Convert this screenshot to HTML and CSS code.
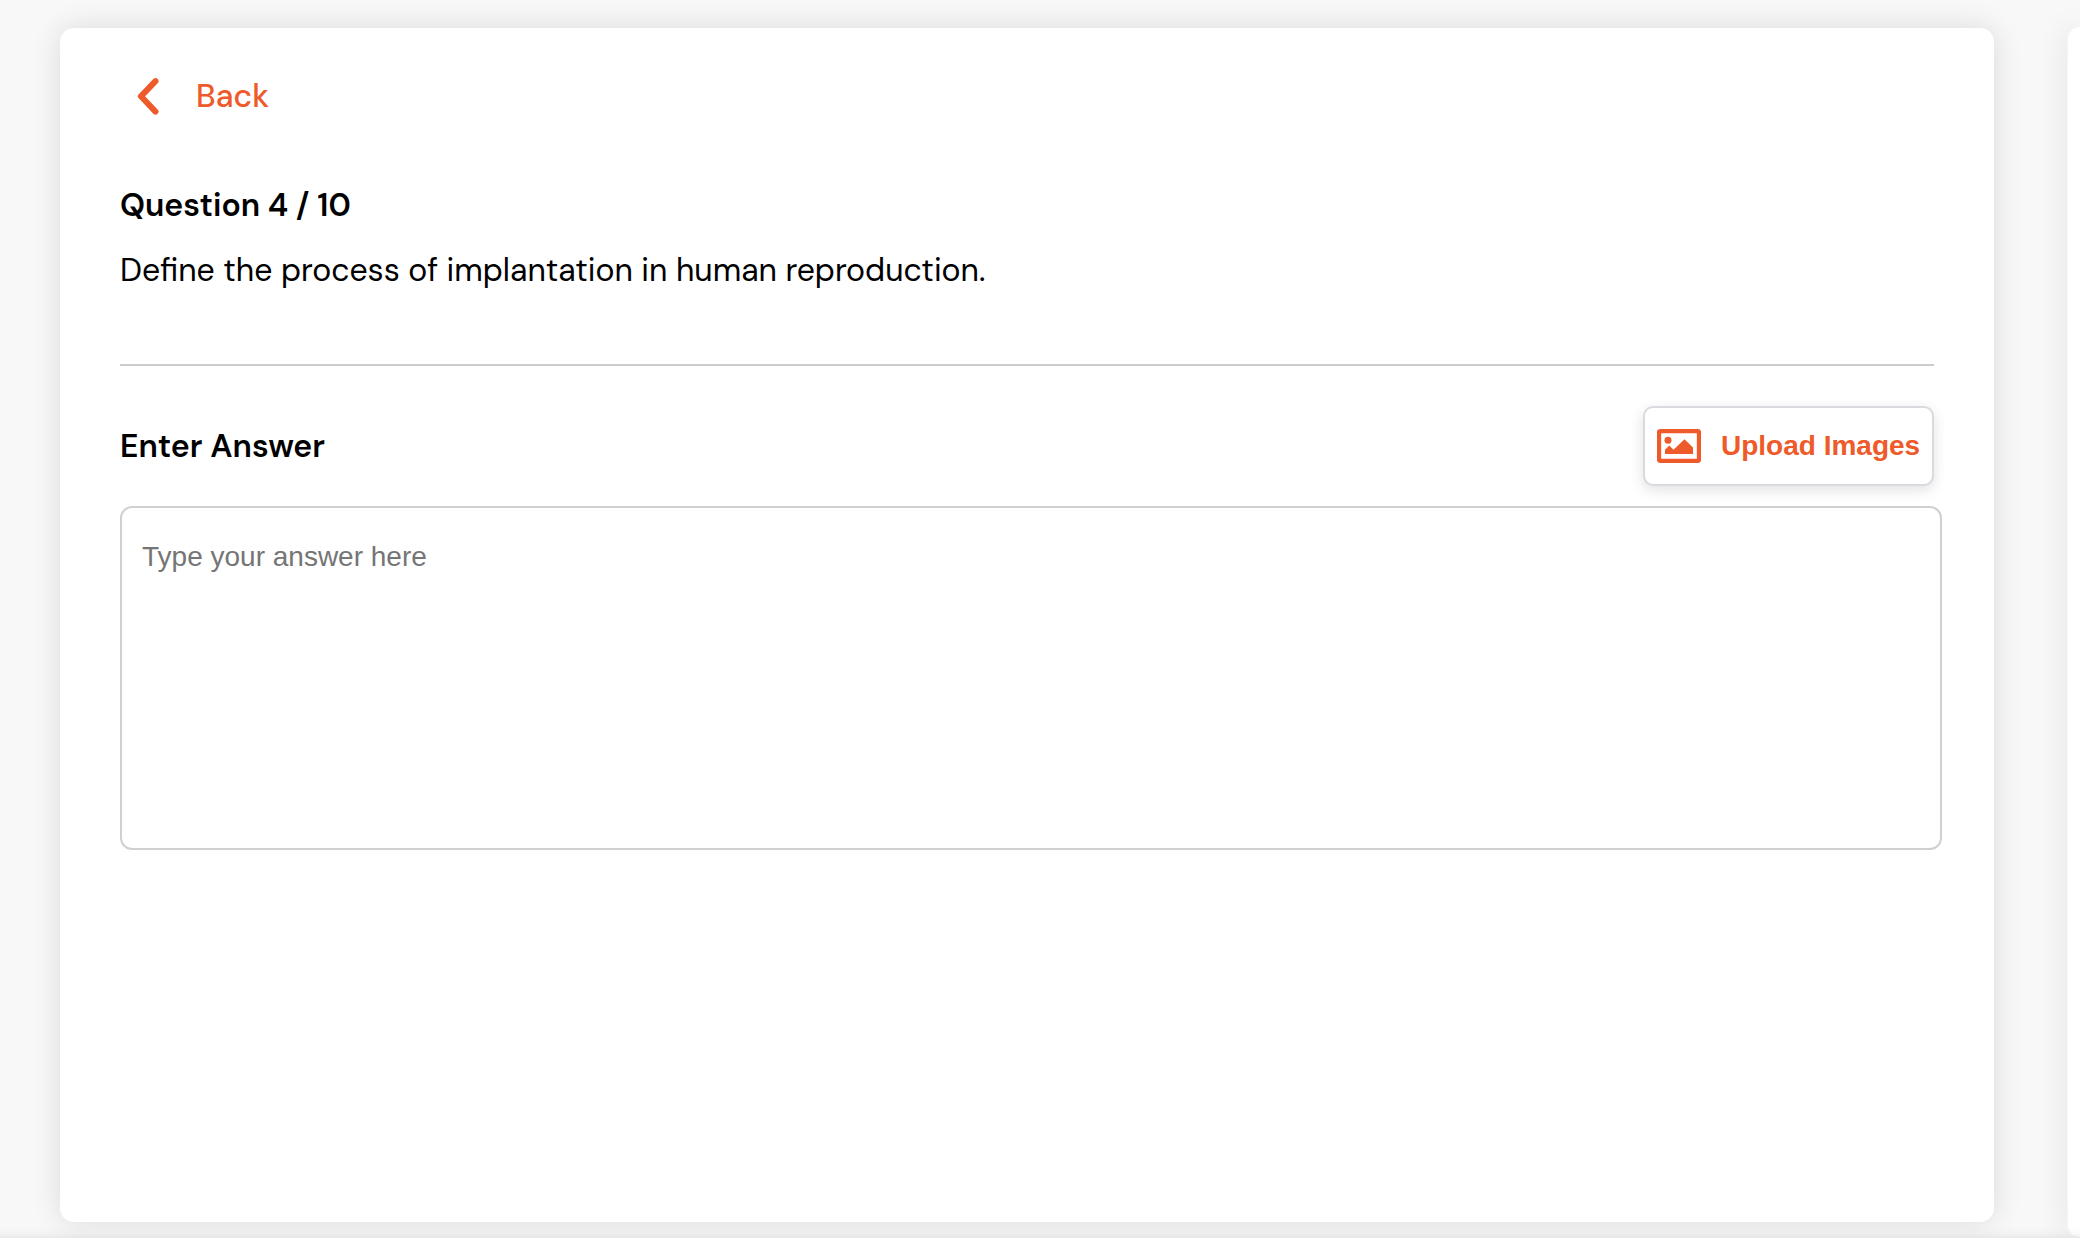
FILE: index.html
```html
<!DOCTYPE html>
<html lang="en">
<head>
<meta charset="utf-8">
<title>Question 4 / 10</title>
<link rel="stylesheet" href="styles.css">
</head>
<body>
<div class="page">
  <main class="board">
    <section class="card">
      <a class="back">
        <svg class="back-icon" width="22" height="37" viewBox="0 0 22 37"><path d="M18.500 3.200 3.900 18.300 18.500 33.600" fill="none" stroke="currentColor" stroke-width="6" stroke-linecap="round" stroke-linejoin="round"/></svg>
        <span class="back-label">Back</span>
      </a>
      <h1 class="heading">Question 4 / 10</h1>
      <p class="question">Define the process of implantation in human reproduction.</p>
      <div class="answer-bar">
        <h2 class="heading">Enter Answer</h2>
        <button class="upload" type="button">
          <svg width="44" height="34" viewBox="0 0 44 34"><rect x="2" y="2.200" width="40" height="29.600" rx="1.500" fill="none" stroke="currentColor" stroke-width="4.300"/><circle cx="11" cy="11.3" r="3.5" fill="currentColor"/><path d="M8 25v-4.2l4.3-4.2 4.2 4.1L27.5 10.200 36 18.500V25Z" fill="currentColor"/></svg>
          <span class="upload-label">Upload Images</span>
        </button>
      </div>
      <textarea class="answer" placeholder="Type your answer here"></textarea>
    </section>
    <aside class="card-next"></aside>
  </main>
  <footer class="footer"></footer>
</div>
</body>
</html>
```
FILE: styles.css
```css
* { box-sizing: border-box; }
html, body { margin: 0; height: 100%; overflow: hidden; }
body {
  background: #f8f8f8;
  color: #000;
  font-family: "DM Sans", Lato, sans-serif;
  font-size: 32px;
}
.page { display: flex; flex-direction: column; height: 1238px; overflow: hidden; }
.board {
  flex: none;
  display: flex;
  align-items: flex-start;
  gap: 73px;
  height: 1238px;
  padding: 28px 0 0 60px;
}
.card, .card-next {
  flex: none;
  background: #fff;
  border-radius: 14px;
  box-shadow: 0 0 30px rgba(0, 0, 0, .12);
}
.card { width: 1934px; height: 1194px; padding: 40px 60px 0; }
.card-next {
  width: 13px;
  height: 1212px;
  margin-top: -2px;
  border: 1px solid #f5f5f5;
  border-right: 0;
  border-radius: 16px 0 0 16px;
}
.footer {
  flex: none;
  position: relative;
  height: 12px;
  margin-top: -12px;
  background: linear-gradient(rgba(0, 0, 0, 0), rgba(0, 0, 0, .02) 60%, rgba(0, 0, 0, .06));
}
.back {
  display: flex;
  align-items: center;
  gap: 37px;
  height: 56px;
  padding-left: 17px;
  color: #ee5a29;
  font-weight: 500;
}
.heading {
  margin: 0;
  font-size: 32px;
  font-weight: 600;
  line-height: 42px;
}
h1.heading { margin-top: 60px; }
.question {
  margin: 23px 0 0;
  height: 117px;
  line-height: 42px;
  border-bottom: 2px solid #ccc;
}
.answer-bar {
  display: flex;
  align-items: center;
  justify-content: space-between;
  height: 80px;
  margin-top: 40px;
}
.upload {
  display: flex;
  align-items: center;
  gap: 20px;
  width: 291px;
  height: 80px;
  padding: 0 0 0 12px;
  background: #fff;
  border: 2px solid #d9d9e0;
  border-radius: 10px;
  box-shadow: 0 4px 14px rgba(0, 0, 0, .12);
  color: #ee5a29;
  font: 700 28px "Liberation Sans", sans-serif;
  white-space: nowrap;
}
.upload svg { flex: none; }
.answer {
  display: block;
  width: 1822px;
  height: 344px;
  margin: 20px 0 0;
  padding: 33px 20px;
  border: 2px solid #d0d0d0;
  border-radius: 12px;
  background: #fff;
  resize: none;
  font: 28px "Liberation Sans", sans-serif;
}
.answer::placeholder { color: #757575; }
```
